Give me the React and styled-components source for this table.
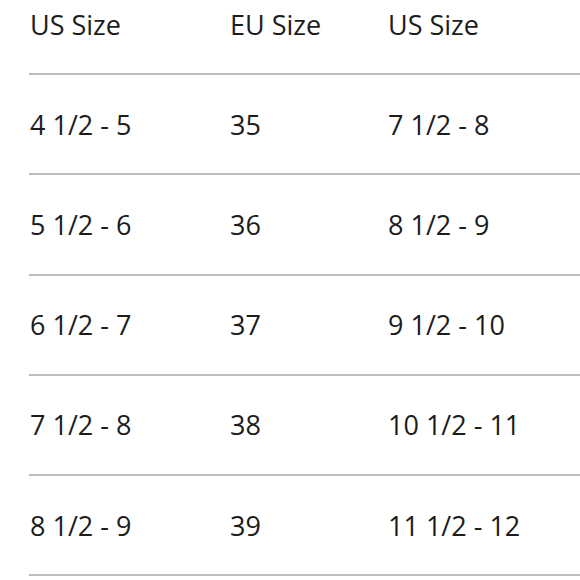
import React from "react";
import styled, { createGlobalStyle } from "styled-components";

const GlobalStyle = createGlobalStyle`
  html, body {
    margin: 0;
    padding: 0;
    background: #ffffff;
  }
  body {
    font-family: "Open Sans", "Liberation Sans", sans-serif;
    color: #1c1c1c;
  }
`;

const Table = styled.div`
  margin-top: -25px;
  padding-left: 29px;
  display: flex;
  flex-direction: column;
`;

const Row = styled.div`
  display: grid;
  grid-template-columns: 200px 158px 1fr;
  align-items: center;
  height: 100.2px;
  box-sizing: border-box;
  border-bottom: 2px solid #bdbdbd;
`;

const Cell = styled.div`
  font-size: 27px;
  line-height: 1;
  margin-left: 1px;
  white-space: nowrap;
`;

const rows = [
  ["US Size", "EU Size", "US Size"],
  ["4 1/2 - 5", "35", "7 1/2 - 8"],
  ["5 1/2 - 6", "36", "8 1/2 - 9"],
  ["6 1/2 - 7", "37", "9 1/2 - 10"],
  ["7 1/2 - 8", "38", "10 1/2 - 11"],
  ["8 1/2 - 9", "39", "11 1/2 - 12"],
];

const App = () => {
  return (
    <>
      <GlobalStyle />
      <Table>
        {rows.map((row, i) => (
          <Row key={i}>
            {row.map((cell, j) => (
              <Cell key={j}>{cell}</Cell>
            ))}
          </Row>
        ))}
      </Table>
    </>
  );
};

export default App;
